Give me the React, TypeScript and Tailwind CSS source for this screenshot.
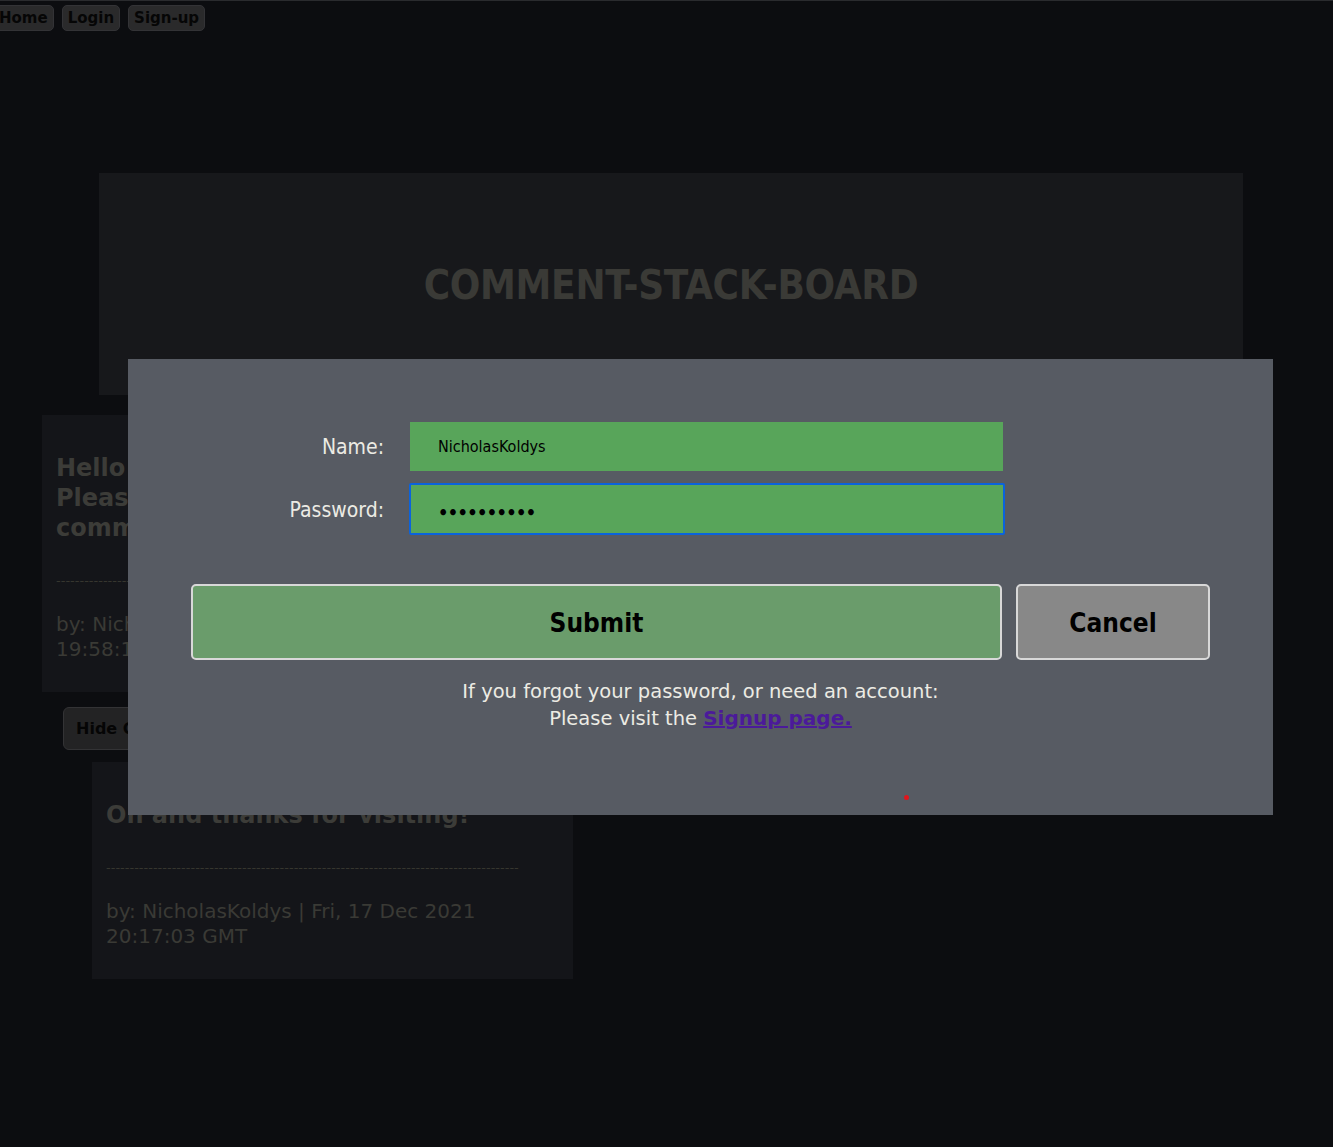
import React from 'react';

const Nav = () => (
  <div className="flex items-center gap-[8px] pt-[4px] ml-[-7px]">
    {['Home', 'Login', 'Sign-up'].map((label) => (
      <button
        key={label}
        className="h-[26px] px-[5px] rounded-[5px] bg-[#2a2a2b] border border-[#333336] text-[#060606] text-[15px] font-bold leading-none"
        style={{ fontFamily: '"DejaVu Sans", sans-serif' }}
      >
        {label}
      </button>
    ))}
  </div>
);

interface CommentProps {
  lines: string[];
  byline: string[];
}

const Comment: React.FC<CommentProps> = ({ lines, byline }) => (
  <div className="bg-[#141519] px-[14px] pt-[38px] pb-[30px]">
    <div className="text-[24px] font-bold leading-[30px] text-[#3c3c38] whitespace-nowrap overflow-hidden">
      {lines.map((l) => (
        <div key={l}>{l}</div>
      ))}
    </div>
    <div className="mt-[31px] h-[14px] text-[13px] leading-[14px] text-[#36362f] whitespace-nowrap">
      {'-'.repeat(88)}
    </div>
    <div className="mt-[24px] text-[20px] leading-[25px] text-[#3a3a35] whitespace-nowrap">
      {byline.map((l) => (
        <div key={l}>{l}</div>
      ))}
    </div>
  </div>
);

export default function App() {
  return (
    <div
      className="relative min-h-[1147px] bg-[#0c0d10] border-t border-[#2a2b2e] overflow-hidden"
      style={{ fontFamily: '"DejaVu Sans", Verdana, sans-serif' }}
    >
      <Nav />

      {/* Header */}
      <div className="ml-[99px] mr-[90px] mt-[142px] h-[222px] bg-[#17181b] flex items-center justify-center">
        <h1
          className="text-[40px] font-bold text-[#3a3a36] tracking-[-0.3px] mt-[2px]"
          style={{ fontFamily: '"DejaVu Sans Condensed", "DejaVu Sans", sans-serif', fontStretch: 'condensed' }}
        >
          COMMENT-STACK-BOARD
        </h1>
      </div>

      {/* Comments */}
      <div className="mt-[20px] ml-[42px] w-[481px]">
        <Comment
          lines={['Hello everyone!', 'Please leave a', 'comment below!']}
          byline={['by: NicholasKoldys | Fri, 17 Dec 2021', '19:58:12 GMT']}
        />
        <button className="mt-[15px] ml-[21px] h-[43px] px-[12px] rounded-[6px] bg-[#232324] border border-[#333335] text-[16px] font-bold text-[#050505]">
          Hide Comments
        </button>
      </div>
      <div className="mt-[12px] ml-[92px] w-[481px]">
        <Comment
          lines={['Oh and thanks for visiting!']}
          byline={['by: NicholasKoldys | Fri, 17 Dec 2021', '20:17:03 GMT']}
        />
      </div>

      {/* Login modal */}
      <div className="absolute left-[128px] top-[358px] w-[1145px] h-[456px] bg-[#575b63]">
        <div
          className="pt-[63px] flex flex-col gap-[12px]"
          style={{ fontFamily: '"DejaVu Sans Condensed", "DejaVu Sans", sans-serif', fontStretch: 'condensed' }}
        >
          <div className="flex items-center">
            <label className="w-[256px] pt-[3px] text-right text-[21px] text-[#ecebe4]">Name:</label>
            <div className="ml-[26px] w-[593px] h-[49px] bg-[#58a55a] flex items-center pl-[28px] text-[16px] text-black">
              NicholasKoldys
            </div>
          </div>
          <div className="flex items-center">
            <label className="w-[256px] pt-[3px] text-right text-[21px] text-[#ecebe4]">Password:</label>
            <div className="ml-[25px] w-[596px] h-[52px] bg-[#58a55a] border-[2px] border-[#0b63dc] rounded-[2px] flex items-center pl-[27px] text-black">
              <span className="mt-[6px] text-[18px] font-bold tracking-[-0.6px]">••••••••••</span>
            </div>
          </div>
        </div>

        <div
          className="mt-[49px] ml-[63px] flex gap-[14px]"
          style={{ fontFamily: '"DejaVu Sans Condensed", "DejaVu Sans", sans-serif', fontStretch: 'condensed' }}
        >
          <button className="w-[811px] h-[76px] pt-[2px] bg-[#6a9c6b] border-[2px] border-[#d8d8d8] rounded-[5px] text-[26px] font-bold text-black">
            Submit
          </button>
          <button className="w-[194px] h-[76px] pt-[2px] bg-[#888888] border-[2px] border-[#d8d8d8] rounded-[5px] text-[26px] font-bold text-black">
            Cancel
          </button>
        </div>

        <div className="mt-[19px] text-center text-[19.5px] leading-[26px] text-[#ecebe4]">
          <div>If you forgot your password, or need an account:</div>
          <div>
            Please visit the{' '}
            <a href="#" className="font-bold underline text-[#4b1a9a] text-[20px]">
              Signup page.
            </a>
          </div>
        </div>

        <div className="absolute left-[776px] top-[436px] w-[5px] h-[5px] rounded-full bg-[#e0161d]" />
      </div>
    </div>
  );
}
